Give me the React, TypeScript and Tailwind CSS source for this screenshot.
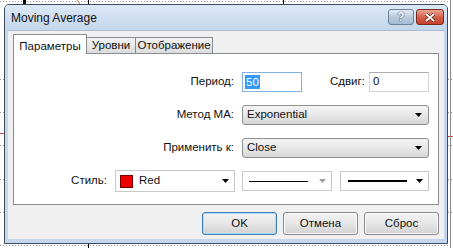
import React from "react";

const font = { fontFamily: '"Liberation Sans", Arial, sans-serif' };

function Arrow({ disabled = false }: { disabled?: boolean }) {
  return (
    <svg width="7" height="4" viewBox="0 0 7 4" className="shrink-0">
      <path d="M0 0 H7 L3.5 4 Z" fill={disabled ? "#a0a0a0" : "#000"} />
    </svg>
  );
}

function DropSelect({ value }: { value: string }) {
  return (
    <div className="flex h-[20px] w-[187px] items-center justify-between rounded-[3px] border border-[#8e8f8f] bg-gradient-to-b from-[#f4f4f4] via-[#e8e8e8] to-[#d6d6d6] pl-[4px] pr-[6px] text-[11.5px] text-[#111]">
      <span>{value}</span>
      <Arrow />
    </div>
  );
}

function Button({ label, primary = false }: { label: string; primary?: boolean }) {
  return (
    <div
      className={
        "flex h-[23px] w-[75px] items-center justify-center rounded-[3px] border bg-gradient-to-b from-[#f3f3f3] via-[#e6e6e6] to-[#d2d2d2] text-[11.5px] text-[#111] " +
        (primary
          ? "border-[#3c7fb1] shadow-[inset_0_0_0_1px_#a6dcf5]"
          : "border-[#8a8a8a] shadow-[inset_0_0_0_1px_#fafafa]")
      }
    >
      {label}
    </div>
  );
}

export default function App() {
  return (
    <div className="relative h-[248px] w-[453px] overflow-hidden bg-white" style={font}>
      {/* chart backdrop */}
      <svg className="absolute left-0 top-0" width="453" height="248">
        <line x1="0" y1="1.5" x2="453" y2="1.5" stroke="#9a9a9a" strokeDasharray="1 2" />
        <line x1="0" y1="245.5" x2="453" y2="245.5" stroke="#9a9a9a" strokeDasharray="1 2" />
        {[79, 112, 145, 179, 212].map((y) => (
          <g key={y}>
            <line x1="0" y1={y + 0.5} x2="4" y2={y + 0.5} stroke="#9a9a9a" strokeDasharray="1 2" />
            <line x1="448" y1={y + 0.5} x2="453" y2={y + 0.5} stroke="#9a9a9a" strokeDasharray="1 2" />
          </g>
        ))}
        <line x1="0" y1="133.5" x2="4" y2="133.5" stroke="#d04040" />
        <line x1="448" y1="136.5" x2="453" y2="136.5" stroke="#d04040" />
        <rect x="23" y="0" width="3" height="4" fill="#000" />
        <line x1="88.5" y1="0" x2="88.5" y2="4" stroke="#000" />
        <line x1="283.5" y1="0" x2="283.5" y2="4" stroke="#000" />
        <line x1="88.5" y1="244" x2="88.5" y2="248" stroke="#000" />
        <line x1="77" y1="0" x2="80" y2="4" stroke="#c07050" />
        <line x1="450.5" y1="0" x2="450.5" y2="248" stroke="#8a8a8a" />
      </svg>

      {/* window */}
      <div className="absolute left-[4px] top-[4px] flex h-[240px] w-[444px] flex-col rounded-t-[5px] border border-[#3d4b5c] bg-[#c3d6ec]">
        {/* title bar */}
        <div className="flex h-[25px] items-center justify-between rounded-t-[4px] bg-gradient-to-b from-[#dce8f6] to-[#c3d6ec] pl-[6px] pr-[3px]">
          <span className="text-[12px] text-[#111]">Moving Average</span>
          <div className="flex gap-[2px] self-start pt-[4px]">
            <div className="flex h-[16px] w-[26px] items-center justify-center rounded-[3px] border border-[#6d819b] bg-gradient-to-b from-[#e4ecf6] via-[#b9cade] to-[#a7bcd6]">
              <span
                className="text-[12px] font-bold leading-none text-white"
                style={{ textShadow: "0 0 1px #334, 0 0 1px #334" }}
              >
                ?
              </span>
            </div>
            <div className="flex h-[16px] w-[28px] items-center justify-center rounded-[3px] border border-[#7a2a1e] bg-gradient-to-b from-[#e9a797] via-[#d2614b] to-[#c4412c]">
              <svg width="10" height="9" viewBox="0 0 10 9">
                <path d="M1 1 L9 8 M9 1 L1 8" stroke="#5a1a10" strokeWidth="3" />
                <path d="M1 1 L9 8 M9 1 L1 8" stroke="#fff" strokeWidth="1.8" />
              </svg>
            </div>
          </div>
        </div>

        {/* client area */}
        <div className="mx-[3px] mb-[4px] flex flex-1 flex-col border-t border-[#a9bcd3] bg-[#f0f0f0] px-[5px] pt-[3px]">
          {/* tabs */}
          <div className="relative z-10 flex h-[19px] items-end">
            <div className="mb-[-1px] flex h-[20px] w-[74px] items-start justify-center border border-b-0 border-[#898c95] bg-white pt-[3px] text-[11.5px] text-[#111]">
              Параметры
            </div>
            <div className="flex h-[16px] w-[49px] items-center justify-center border border-l-0 border-b-0 border-[#898c95] bg-gradient-to-b from-[#f2f2f2] to-[#dcdcdc] text-[11.5px] text-[#111]">
              Уровни
            </div>
            <div className="flex h-[16px] w-[77px] items-center justify-center border border-l-0 border-b-0 border-[#898c95] bg-gradient-to-b from-[#f2f2f2] to-[#dcdcdc] text-[11.5px] text-[#111]">
              Отображение
            </div>
          </div>

          {/* panel */}
          <div className="flex h-[152px] w-[426px] flex-col border border-[#898c95] bg-white pt-[18px] text-[11.5px] text-[#111]">
            <div className="flex h-[20px] items-center">
              <div className="w-[220px] text-right">Период:</div>
              <div className="ml-[8px] flex h-[20px] w-[60px] items-center border border-[#7fb2e0] bg-white pl-[2px]">
                <span className="bg-[#3399ff] px-[1px] leading-[14px] text-white">50</span>
              </div>
              <div className="ml-[28px] w-[36px]">Сдвиг:</div>
              <div className="ml-[3px] flex h-[20px] w-[60px] items-center border border-[#cfd3da] border-t-[#abadb3] bg-white pl-[3px]">
                0
              </div>
            </div>

            <div className="mt-[13px] flex h-[20px] items-center">
              <div className="w-[220px] text-right">Метод МА:</div>
              <div className="ml-[8px]">
                <DropSelect value="Exponential" />
              </div>
            </div>

            <div className="mt-[13px] flex h-[20px] items-center">
              <div className="w-[220px] text-right">Применить к:</div>
              <div className="ml-[8px]">
                <DropSelect value="Close" />
              </div>
            </div>

            <div className="mt-[12px] flex h-[22px] items-center">
              <div className="w-[93px] text-right">Стиль:</div>
              <div className="ml-[8px] flex h-[22px] w-[120px] items-center border border-[#c9c9c9] bg-white pl-[4px] pr-[5px]">
                <div className="h-[13px] w-[13px] border border-[#7a0000] bg-[#ee0000]" />
                <span className="ml-[6px] flex-1">Red</span>
                <Arrow />
              </div>
              <div className="ml-[7px] flex h-[20px] w-[90px] items-center border border-[#c9c9c9] bg-white pl-[6px] pr-[5px]">
                <div className="h-[1px] w-[59px] bg-black" />
                <div className="flex-1" />
                <Arrow disabled />
              </div>
              <div className="ml-[8px] flex h-[20px] w-[89px] items-center border border-[#c9c9c9] bg-white pl-[7px] pr-[5px]">
                <div className="h-[2px] w-[59px] bg-black" />
                <div className="flex-1" />
                <Arrow />
              </div>
            </div>
          </div>

          {/* buttons */}
          <div className="mt-[7px] flex w-[426px] justify-end gap-[6px]">
            <Button label="OK" primary />
            <Button label="Отмена" />
            <Button label="Сброс" />
          </div>
        </div>
      </div>
    </div>
  );
}
